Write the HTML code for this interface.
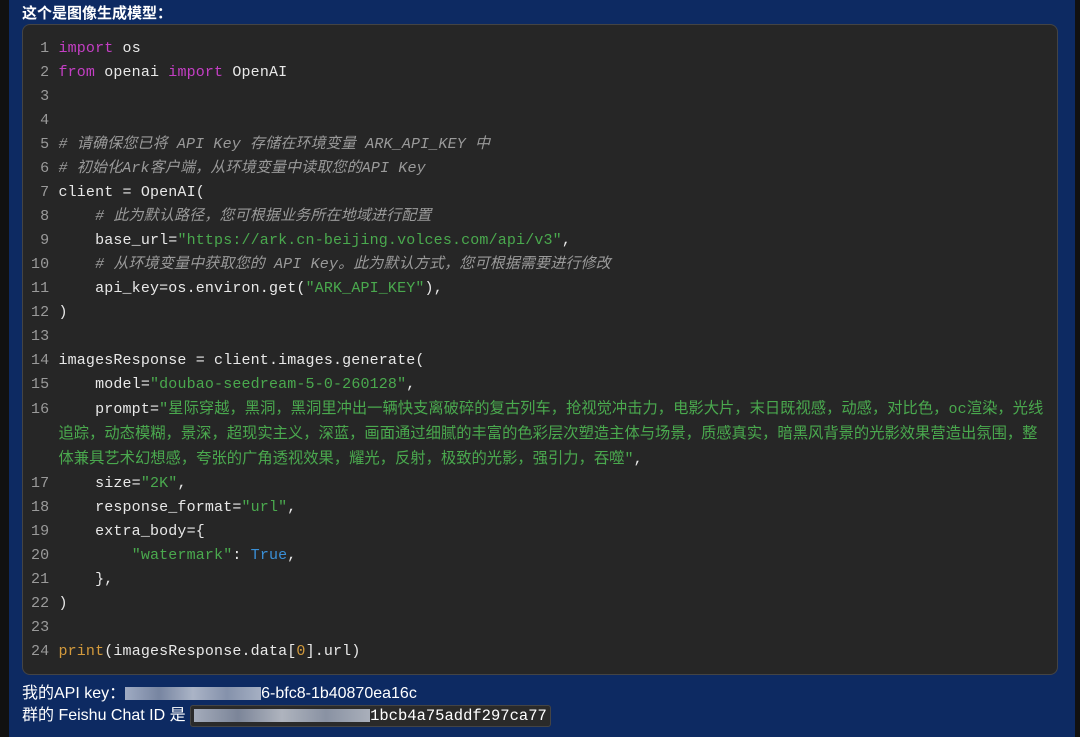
<!DOCTYPE html>
<html><head><meta charset="utf-8"><style>
body{margin:0;width:1080px;height:737px;background:#111;overflow:hidden;font-family:"Liberation Sans","Noto Sans CJK SC",sans-serif}
.bg{position:absolute;left:9px;top:0;width:1066px;height:737px;background:#0d2a62}
.title{position:absolute;left:22px;top:2px;color:#fff;font-size:15px;font-weight:bold}
.code{position:absolute;left:22px;top:24px;width:1036px;height:651px;background:#262626;border:1px solid #444;border-radius:8px;box-sizing:border-box}
pre{margin:0;position:absolute;left:8px;top:12px;font-family:"Liberation Mono","Noto Sans CJK SC",monospace;font-size:15px;line-height:24px;color:#e8e8e8;letter-spacing:0.15px}
pre div{height:24px}
.n{color:#9a9a9a}.k{color:#c43fc4}.s{color:#4aa94e}.c{color:#9a9a9a;font-style:italic}.o{color:#d39a3c}.b{color:#3a8fd6}
.cj{font-size:15.3px;letter-spacing:0}
.foot{position:absolute;left:22px;color:#fff;font-size:16px}
.blur{display:inline-block;height:13px;background:linear-gradient(90deg,#b9c2d4,#8a95ac,#c6ccd8,#9aa4b8,#c0c7d4);vertical-align:middle;opacity:.85}
.chip{background:#2a2a2a;border:1px solid #444;border-radius:3px;font-family:"Liberation Mono",monospace;padding:1px 3px;font-size:15.5px}
</style></head><body>
<div class="bg"></div>
<div class="title">这个是图像生成模型：</div>
<div class="code"><pre><span class="n"> 1</span> <span class="k">import</span> os
<span class="n"> 2</span> <span class="k">from</span> openai <span class="k">import</span> OpenAI
<span class="n"> 3</span>
<span class="n"> 4</span>
<span class="n"> 5</span> <span class="c"># 请确保您已将 API Key 存储在环境变量 ARK_API_KEY 中</span>
<span class="n"> 6</span> <span class="c"># 初始化Ark客户端，从环境变量中读取您的API Key</span>
<span class="n"> 7</span> client = OpenAI(
<span class="n"> 8</span>     <span class="c"># 此为默认路径，您可根据业务所在地域进行配置</span>
<span class="n"> 9</span>     base_url=<span class="s">"https://ark.cn-beijing.volces.com/api/v3"</span>,
<span class="n">10</span>     <span class="c"># 从环境变量中获取您的 API Key。此为默认方式，您可根据需要进行修改</span>
<span class="n">11</span>     api_key=os.environ.get(<span class="s">"ARK_API_KEY"</span>),
<span class="n">12</span> )
<span class="n">13</span>
<span class="n">14</span> imagesResponse = client.images.generate(
<span class="n">15</span>     model=<span class="s">"doubao-seedream-5-0-260128"</span>,
<span class="n">16</span>     prompt=<span class="s">"<span class="cj">星际穿越，黑洞，黑洞里冲出一辆快支离破碎的复古列车，抢视觉冲击力，电影大片，末日既视感，动感，对比色，</span>oc<span class="cj">渲染，光线</span></span>
   <span class="s cj">追踪，动态模糊，景深，超现实主义，深蓝，画面通过细腻的丰富的色彩层次塑造主体与场景，质感真实，暗黑风背景的光影效果营造出氛围，整</span>
   <span class="s"><span class="cj">体兼具艺术幻想感，夸张的广角透视效果，耀光，反射，极致的光影，强引力，吞噬</span>"</span>,
<span class="n">17</span>     size=<span class="s">"2K"</span>,
<span class="n">18</span>     response_format=<span class="s">"url"</span>,
<span class="n">19</span>     extra_body={
<span class="n">20</span>         <span class="s">"watermark"</span>: <span class="b">True</span>,
<span class="n">21</span>     },
<span class="n">22</span> )
<span class="n">23</span>
<span class="n">24</span> <span class="o">print</span>(imagesResponse.data[<span class="o">0</span>].url)</pre></div>
<div class="foot" style="top:679px">我的API key：<span class="blur" style="width:136px"></span>6-bfc8-1b40870ea16c</div>
<div class="foot" style="top:701px">群的 Feishu Chat ID 是 <span class="chip"><span class="blur" style="width:176px"></span>1bcb4a75addf297ca77</span></div>
</body></html>
